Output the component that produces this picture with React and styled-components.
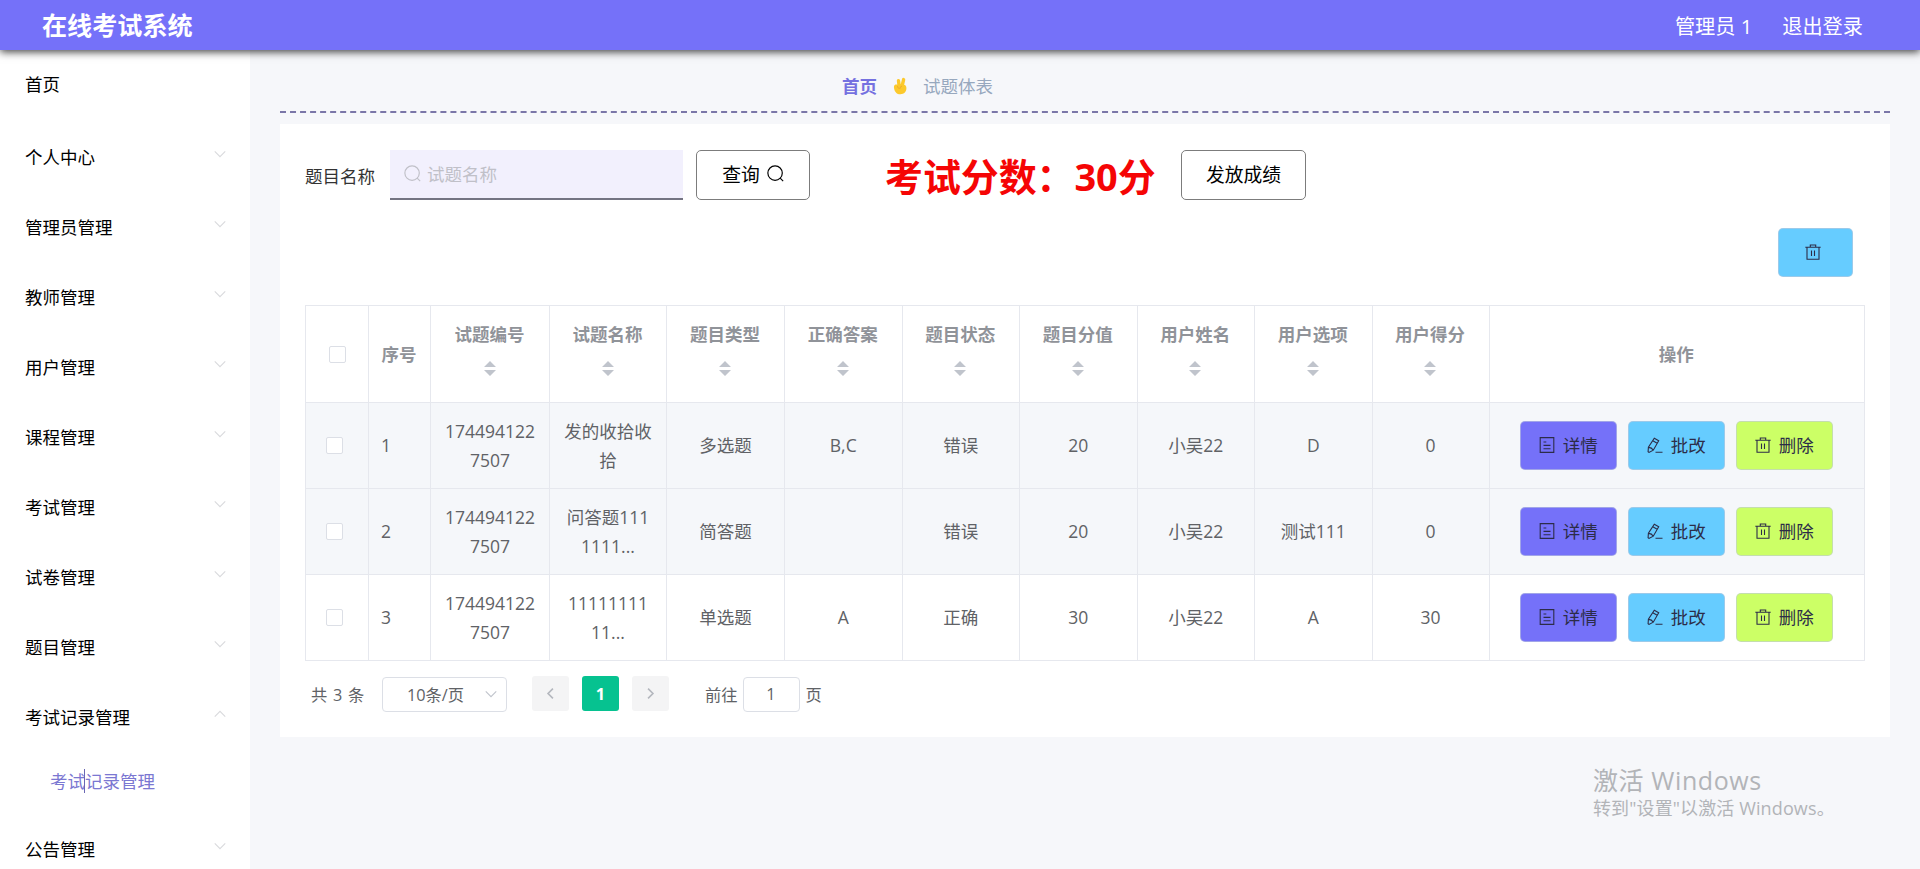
import React from 'react';
import styled, { createGlobalStyle } from 'styled-components';

const GlobalStyle = createGlobalStyle`
  * {
    box-sizing: border-box;
  }

  body {
    margin: 0;
    overflow: hidden;
    background: #f6f7fa;
    color: #606266;
    font-family: 'Open Sans', 'Noto Sans CJK SC', sans-serif;
    font-size: 17.5px;
  }

  button,
  input {
    font-family: inherit;
  }
`;

const Page = styled.div`
  display: flex;
  flex-direction: column;
  height: 869px;
  overflow: hidden;
`;

const Header = styled.header`
  position: relative;
  z-index: 1;
  flex: none;
  display: flex;
  align-items: center;
  justify-content: space-between;
  height: 50px;
  padding: 0 57px 0 42px;
  background: #7571f9;
  box-shadow: 0 2px 8px rgba(0, 0, 0, 0.75);
  color: #fff;
`;

const Brand = styled.h1`
  margin: 0;
  font-size: 25.1px;
  line-height: 50px;
`;

const HeaderLinks = styled.nav`
  display: flex;
  gap: 30px;
  padding-top: 2px;
  font-size: 20.2px;
  line-height: 50px;
`;

const Body = styled.div`
  flex: 1;
  display: flex;
  min-height: 0;
`;

const Sidebar = styled.aside`
  flex: none;
  width: 250px;
  overflow: hidden;
  background: #fff;
`;

const MenuItem = styled.div`
  display: flex;
  align-items: center;
  justify-content: space-between;
  height: ${({ $first }) => ($first ? 72 : 70)}px;
  padding: 0 24px ${({ $first }) => ($first ? 5 : 2)}px 25px;
  color: #000;

  svg {
    margin-bottom: 4px;
  }
`;

const SubItem = styled.div`
  position: relative;
  display: flex;
  align-items: center;
  height: 62px;
  padding: 0 0 6px 50px;
  color: #7b77d2;
`;

const TextCursor = styled.span`
  position: absolute;
  top: 17px;
  left: 84px;
  width: 1px;
  height: 24px;
  background: #6a67b4;
`;

const Main = styled.main`
  flex: 1;
  min-width: 0;
  padding: 0 30px;
`;

const Breadcrumb = styled.div`
  display: flex;
  align-items: center;
  height: 63px;
  padding: 10px 0 0 562px;
  border-bottom: 2px dashed #7a76a8;
  color: #97a8be;

  b {
    color: #7571e0;
  }

  svg {
    margin: 0 14px 0 15px;
  }
`;

const Card = styled.section`
  height: 613px;
  margin-top: 11px;
  padding: 26px 25px 0;
  background: #fff;
`;

const SearchRow = styled.div`
  display: flex;
  align-items: center;
  height: 50px;
`;

const Label = styled.label`
  width: 85px;
  color: #333;
`;

const SearchBox = styled.div`
  display: flex;
  align-items: center;
  gap: 6px;
  width: 293px;
  height: 50px;
  padding: 0 14px 1px;
  background: #f2f0fd;
  border-bottom: 2px solid #747482;
  color: #c0c0c8;
`;

const SearchInput = styled.input`
  width: 200px;
  padding: 0;
  border: 0;
  outline: 0;
  background: transparent;
  font-size: 17.5px;

  &::placeholder {
    color: #c0c0c8;
  }
`;

const PlainButton = styled.button`
  display: flex;
  align-items: center;
  justify-content: center;
  gap: 7px;
  width: ${({ $width }) => $width}px;
  height: 50px;
  margin-left: ${({ $left }) => $left}px;
  padding: 0 0 4px;
  background: #fff;
  border: 1px solid #7c7c7c;
  border-radius: 5px;
  color: #000;
  font-size: 18.75px;
`;

const Score = styled.strong`
  width: 271px;
  margin-left: 75px;
  padding-top: 2px;
  color: #f50505;
  font-size: 37.9px;
  line-height: 48px;
  white-space: nowrap;
`;

const BulkRow = styled.div`
  display: flex;
  justify-content: flex-end;
  padding: 28px 12px 0 0;
  height: 105px;
`;

const colors = {
  violet: '#7571f9',
  sky: '#66ccff',
  lime: '#ccff66',
};

const ColorButton = styled.button`
  display: flex;
  align-items: center;
  justify-content: center;
  gap: 8px;
  width: ${({ $width }) => $width || 97}px;
  height: 49px;
  padding: 0 ${({ $shift }) => $shift || 0}px 2px 0;
  background: ${({ $color }) => colors[$color]};
  border: 1px solid rgba(190, 200, 220, 0.6);
  border-radius: 5px;
  color: #2c2c48;
  font-size: 17.5px;
`;

const Table = styled.div`
  width: 1560px;
  border-top: 1px solid #e6e8ee;
  border-left: 1px solid #e6e8ee;
`;

const Row = styled.div`
  display: grid;
  grid-template-columns: 63px 62px 119px 117px 118px 117.5px 117.5px 117.5px 117.5px 117.5px 117px 1fr;
  height: ${({ $head }) => ($head ? 97 : 86)}px;
  background: ${({ $striped }) => ($striped ? '#f5f7fa' : '#fff')};
`;

const Cell = styled.div`
  display: flex;
  flex-direction: column;
  align-items: ${({ $left }) => ($left ? 'flex-start' : 'center')};
  justify-content: center;
  padding: 0 12px;
  border-right: 1px solid #e6e8ee;
  border-bottom: 1px solid #e6e8ee;
  line-height: 29px;
  text-align: center;
  white-space: pre-line;
`;

const HeadCell = styled(Cell)`
  color: #909399;
  font-weight: bold;
  padding: 0 1px 0 0;
`;

const CheckBox = styled.span`
  width: 17px;
  height: 17px;
  margin-left: ${({ $left }) => $left}px;
  background: #fff;
  border: 1px solid #dcdfe6;
  border-radius: 2px;
`;

const Sorter = styled.svg`
  margin: 12px 0 13px;
`;

const Actions = styled(Cell)`
  flex-direction: row;
  align-items: center;
  gap: 11px;
  padding: 0 13px 0 12px;
`;

const Pager = styled.div`
  display: flex;
  align-items: center;
  padding: 14px 0 0 6px;
  font-size: 16.25px;
`;

const Total = styled.span`
  width: 71px;
  word-spacing: 1.5px;
`;

const PageSize = styled.div`
  display: flex;
  align-items: center;
  justify-content: space-between;
  width: 125px;
  height: 35px;
  margin: 2px 25px 0 0;
  padding: 0 9px 1px 24px;
  border: 1px solid #dcdfe6;
  border-radius: 4px;
  color: #606266;
`;

const PageButton = styled.button`
  display: flex;
  align-items: center;
  justify-content: center;
  width: 37px;
  height: 35px;
  margin-right: 13px;
  padding: 0;
  background: ${({ $active }) => ($active ? '#06c290' : '#f4f4f5')};
  border: 0;
  border-radius: 3px;
  color: ${({ $active }) => ($active ? '#fff' : '#b4b7be')};
  font-size: 16.25px;
  font-weight: bold;
`;

const Jump = styled.div`
  display: flex;
  align-items: center;
  margin-left: 23px;
`;

const PageInput = styled.input`
  width: 57px;
  height: 35px;
  margin: 2px 6px 0 5px;
  padding: 0 0 1px;
  border: 1px solid #dcdfe6;
  border-radius: 4px;
  color: #606266;
  font-size: 16.25px;
  text-align: center;
`;

const Activation = styled.div`
  position: absolute;
  top: 764px;
  left: 1593px;
  color: #b2b4b8;
  font-size: 18px;
  line-height: 22px;
  letter-spacing: 0.12px;
  white-space: nowrap;
`;

const ActivationTitle = styled.div`
  font-size: 25px;
  line-height: 33px;
  letter-spacing: 0.6px;
`;

const Icon = ({ size = 17, children, ...rest }) => (
  <svg
    width={size}
    height={size}
    viewBox="0 0 16 16"
    fill="none"
    stroke="currentColor"
    strokeWidth="1.1"
    {...rest}
  >
    {children}
  </svg>
);

const SearchIcon = ({ size }) => (
  <Icon size={size}>
    <circle cx="7.6" cy="7.6" r="6.8" />
    <path d="M12.4 12.4l2.8 2.8" />
  </Icon>
);

const TrashIcon = () => (
  <Icon size={16}>
    <path d="M.3 3.3h15.4M5.3 3.2V1h5.4v2.2M2 3.3v11.9h12V3.3M6.5 6.5v5.400M9.500 6.500v5.400" />
  </Icon>
);

const DocIcon = () => (
  <Icon size={16}>
    <path d="M1.200.6h13.600v14.800H1.200zM4.500 5h2.800M4.500 8.400h7M4.500 11.800h7" />
  </Icon>
);

const EditIcon = () => (
  <Icon size={16}>
    <path d="M7.300 1.200l4.400 2.500-5.400 9.500-4.300 2.200-.9-.6.300-4.700zM5.800 3.800l4.400 2.500M1.600 10.400c2 .1 3.600.9 4.500 2.600M8.500 15.200h7" />
  </Icon>
);

const Chevron = ({ up, color = '#d9dadd', size = 12 }) => (
  <Icon size={size} stroke={color} strokeWidth="1.5">
    <path d={up ? 'M1 11.5l7-7 7 7' : 'M1 4.500l7 7 7-7'} />
  </Icon>
);

const VictoryHand = () => (
  <svg width="17" height="18" viewBox="0 0 17 18">
    <g stroke="#fcc92c" strokeLinecap="round" strokeWidth="3.4">
      <path d="M7.200 9.500L6.500 3.600M10 9.500l1.600-6.900" />
    </g>
    <path
      d="M3.400 7.400C1.900 8 1.800 9.700 2.100 11.400c.6 3.500 2.800 5.800 6.200 5.800 3.900 0 6.200-2.500 6.100-6.200 0-1.700-.9-3-2.600-3.200z"
      fill="#fcc92c"
    />
    <path d="M5.400 9.200l1.100 2.300M10 9.100c-1.500.5-2.300 1.500-2.200 2.900" fill="none" stroke="#eda92c" />
  </svg>
);

const SortIcon = () => (
  <Sorter width="12" height="15" viewBox="0 0 12 15" fill="#c0c4cc">
    <path d="M0 6l6-6 6 6zM0 9l6 6 6-6z" />
  </Sorter>
);

const menu = [
  '个人中心',
  '管理员管理',
  '教师管理',
  '用户管理',
  '课程管理',
  '考试管理',
  '试卷管理',
  '题目管理',
];

const columns = [
  '试题编号',
  '试题名称',
  '题目类型',
  '正确答案',
  '题目状态',
  '题目分值',
  '用户姓名',
  '用户选项',
  '用户得分',
];

const rows = [
  ['174494122\n7507', '发的收拾收\n拾', '多选题', 'B,C', '错误', '20', '小吴22', 'D', '0'],
  ['174494122\n7507', '问答题111\n1111...', '简答题', '', '错误', '20', '小吴22', '测试111', '0'],
  ['174494122\n7507', '11111111\n11...', '单选题', 'A', '正确', '30', '小吴22', 'A', '30'],
];

const RecordTable = () => (
  <Table>
    <Row $head>
      <HeadCell>
        <CheckBox $left={1} />
      </HeadCell>
      <HeadCell>序号</HeadCell>
      {columns.map((title) => (
        <HeadCell key={title}>
          {title}
          <SortIcon />
        </HeadCell>
      ))}
      <HeadCell>操作</HeadCell>
    </Row>
    {rows.map((values, i) => (
      <Row key={i} $striped={i < 2}>
        <Cell $left>
          <CheckBox $left={8} />
        </Cell>
        <Cell $left>{i + 1}</Cell>
        {values.map((value, j) => (
          <Cell key={columns[j]}>{value}</Cell>
        ))}
        <Actions>
          <ColorButton $color="violet">
            <DocIcon />
            详情
          </ColorButton>
          <ColorButton $color="sky">
            <EditIcon />
            批改
          </ColorButton>
          <ColorButton $color="lime">
            <TrashIcon />
            删除
          </ColorButton>
        </Actions>
      </Row>
    ))}
  </Table>
);

const Pagination = () => (
  <Pager>
    <Total>共 3 条</Total>
    <PageSize>
      10条/页
      <Chevron color="#c0c4cc" />
    </PageSize>
    <PageButton>
      <Icon size={13} strokeWidth="2">
        <path d="M11 2L5 8l6 6" />
      </Icon>
    </PageButton>
    <PageButton $active>1</PageButton>
    <PageButton>
      <Icon size={13} strokeWidth="2">
        <path d="M5 2l6 6-6 6" />
      </Icon>
    </PageButton>
    <Jump>
      前往
      <PageInput defaultValue="1" />页
    </Jump>
  </Pager>
);

export default () => (
  <Page>
    <GlobalStyle />
    <Header>
      <Brand>在线考试系统</Brand>
      <HeaderLinks>
        <span>管理员 1</span>
        <span>退出登录</span>
      </HeaderLinks>
    </Header>
    <Body>
      <Sidebar>
        <MenuItem $first>首页</MenuItem>
        {menu.map((name) => (
          <MenuItem key={name}>
            {name}
            <Chevron />
          </MenuItem>
        ))}
        <MenuItem>
          考试记录管理
          <Chevron up />
        </MenuItem>
        <SubItem>
          考试记录管理
          <TextCursor />
        </SubItem>
        <MenuItem>
          公告管理
          <Chevron />
        </MenuItem>
      </Sidebar>
      <Main>
        <Breadcrumb>
          <b>首页</b>
          <VictoryHand />
          试题体表
        </Breadcrumb>
        <Card>
          <SearchRow>
            <Label>题目名称</Label>
            <SearchBox>
              <SearchIcon />
              <SearchInput placeholder="试题名称" />
            </SearchBox>
            <PlainButton $width={114} $left={13}>
              查询
              <SearchIcon />
            </PlainButton>
            <Score>考试分数：30分</Score>
            <PlainButton $width={125} $left={25}>
              发放成绩
            </PlainButton>
          </SearchRow>
          <BulkRow>
            <ColorButton $color="sky" $width={75} $shift={6}>
              <TrashIcon />
            </ColorButton>
          </BulkRow>
          <RecordTable />
          <Pagination />
        </Card>
      </Main>
    </Body>
    <Activation>
      <ActivationTitle>激活 Windows</ActivationTitle>
      转到"设置"以激活 Windows。
    </Activation>
  </Page>
);
